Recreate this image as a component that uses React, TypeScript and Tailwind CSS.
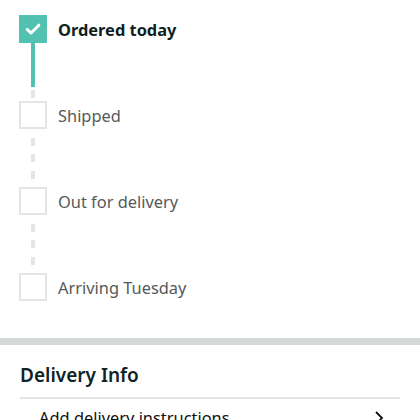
import React from "react";

const Dashes = ({ count, h }: { count: number; h: number }) => (
  <div className="flex flex-col justify-evenly items-center w-7" style={{ height: h }}>
    {Array.from({ length: count }).map((_, i) => (
      <div key={i} className="w-1 h-[8px] bg-[#e3e6e6]" />
    ))}
  </div>
);

const Step = ({ label, done }: { label: string; done?: boolean }) => (
  <div className="flex items-center h-7">
    {done ? (
      <div className="w-7 h-7 bg-[#52c1af] flex items-center justify-center">
        <svg width="18" height="18" viewBox="0 0 16 16">
          <path d="M2.8 8.4 L6.3 11.6 L13.2 4.6" stroke="white" strokeWidth="2.6" fill="none" strokeLinecap="round" strokeLinejoin="round" />
        </svg>
      </div>
    ) : (
      <div className="w-7 h-7 border-2 border-[#e3e6e6] bg-white" />
    )}
    <span
      className={
        "ml-[11px] mt-[2px] text-[16.4px] " +
        (done ? "font-bold text-[#0f1f1f]" : "text-[#565959]")
      }
    >
      {label}
    </span>
  </div>
);

export default function App() {
  return (
    <div className="w-[420px] h-[420px] overflow-hidden bg-white" style={{ fontFamily: "'Noto Sans', 'Open Sans', sans-serif" }}>
      <div className="pt-[15px] pl-[19px]">
        <Step label="Ordered today" done />
        <div className="flex flex-col items-center w-7">
          <div className="w-1 h-[44px] bg-[#52c1af]" />
          <Dashes count={1} h={14} />
        </div>
        <Step label="Shipped" />
        <Dashes count={3} h={58} />
        <Step label="Out for delivery" />
        <Dashes count={3} h={58} />
        <Step label="Arriving Tuesday" />
      </div>
      <div className="mt-[37px] h-[7px] bg-[#d5d9d9]" />
      <div className="px-5">
        <div className="pt-[18px] pb-[9px] text-[19px] font-semibold text-[#0f2424] leading-[24px]">
          Delivery Info
        </div>
        <div className="h-[2px] bg-[#e3e6e6] mt-[1px]" />
        <div className="flex items-center justify-between pl-[19px] pr-[16px] pt-[7px]">
          <span className="text-[16.4px] text-[#0f1111]">Add delivery instructions</span>
          <svg width="10" height="16" viewBox="0 0 10 16">
            <path d="M2 2 L8 8 L2 14" stroke="#0f1111" strokeWidth="1.8" fill="none" />
          </svg>
        </div>
      </div>
    </div>
  );
}
